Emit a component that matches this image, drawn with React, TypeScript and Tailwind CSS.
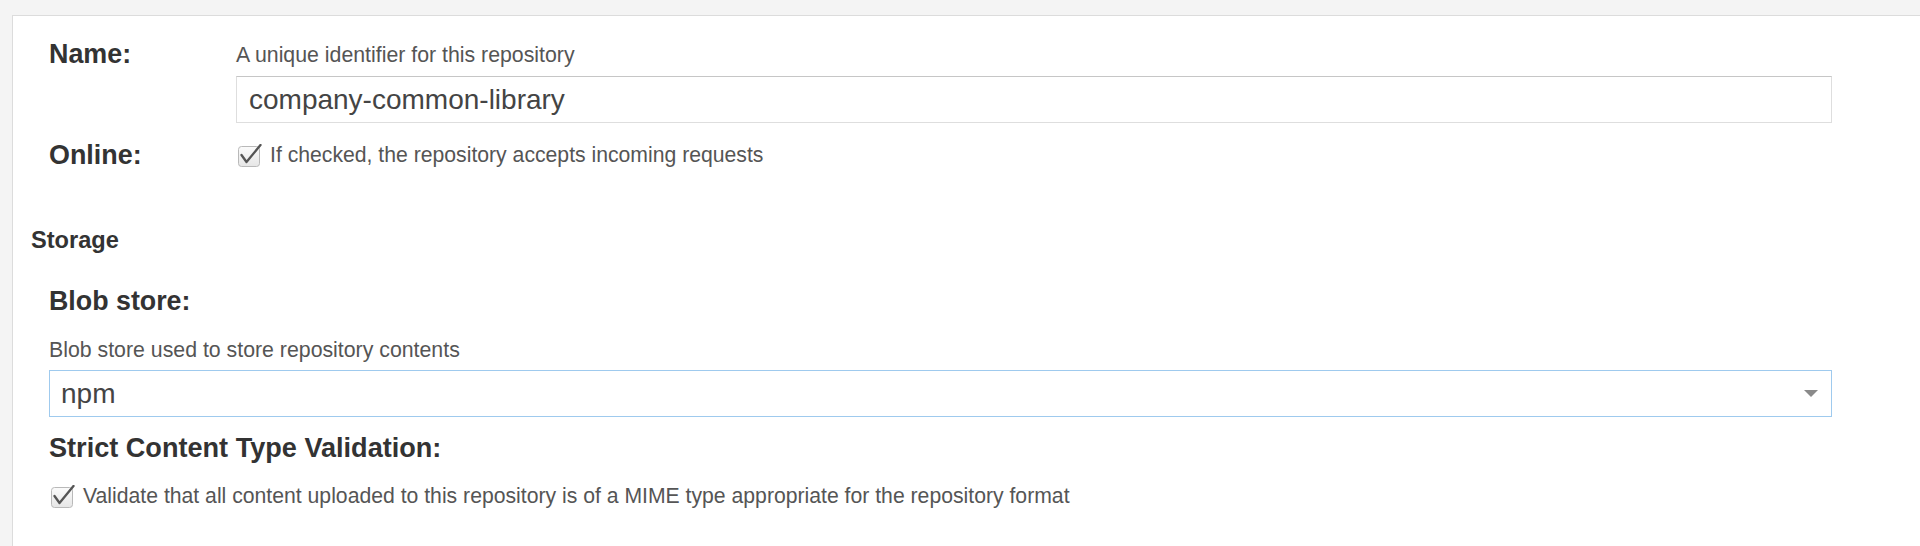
import React from "react";

const font = "font-['Liberation_Sans',Arial,sans-serif]";

// checkbox with the tick running past the box corner, like the ExtJS theme
function Check() {
  return (
    <svg width="24" height="23" viewBox="0 0 24 23" className="shrink-0">
      <defs>
        <linearGradient id="cbg" x1="0" y1="0" x2="0" y2="1">
          <stop offset="0" stopColor="#fbfbfb" />
          <stop offset="1" stopColor="#e6e6e6" />
        </linearGradient>
      </defs>
      <rect x="0.5" y="2.5" width="21" height="20" rx="3" fill="url(#cbg)" stroke="#b9b9b9" />
      <path d="M3.5 11 L8.5 18 L22.5 1" fill="none" stroke="#555" strokeWidth="2.3" strokeLinecap="round" strokeLinejoin="round" />
    </svg>
  );
}

function Label({ children }: { children: React.ReactNode }) {
  return <div className="w-[187px] shrink-0 text-[26.9px] font-bold leading-[30px] text-[#333]">{children}</div>;
}

export default function App() {
  return (
    <div className={`${font} min-h-[546px] bg-[#f4f4f4] pt-[15px] pl-[12px]`}>
      <div className="min-h-[531px] border-t border-l border-[#dcdcdc] bg-white pt-[23px]">
        {/* general */}
        <div className="pl-[36px] pr-[88px]">
          <div className="flex items-start">
            <Label>Name:</Label>
            <div className="flex-1 pt-[4px]">
              <div className="text-[21.3px] leading-[24px] text-[#555]">A unique identifier for this repository</div>
              <div className="mt-[9px] flex h-[47px] items-center border border-[#dedede] border-t-[#c6c6c6] pl-[12px] text-[28px] text-[#444]">
                company-common-library
              </div>
            </div>
          </div>
          <div className="mt-[17px] flex items-center">
            <Label>Online:</Label>
            <div className="flex h-[30px] items-center gap-[8px] pl-[2px]">
              <Check />
              <span className="text-[21.2px] leading-[24px] text-[#555]">If checked, the repository accepts incoming requests</span>
            </div>
          </div>
        </div>

        {/* storage */}
        <div className="mt-[56px] pl-[18px] text-[23.6px] font-bold leading-[28px] text-[#333]">Storage</div>
        <div className="pl-[36px] pr-[88px]">
          <div className="mt-[32px] text-[26.8px] font-bold leading-[30px] text-[#333]">Blob store:</div>
          <div className="mt-[22px] text-[21.3px] leading-[24px] text-[#555]">Blob store used to store repository contents</div>
          <div className="mt-[8px] flex h-[47px] items-center justify-between border border-[#9fcaee] pl-[11px] pr-[13px]">
            <span className="text-[28px] text-[#444]">npm</span>
            <svg width="14" height="7" viewBox="0 0 14 7">
              <path d="M0 0 H14 L7 7 Z" fill="#8a8a8a" />
            </svg>
          </div>
          <div className="mt-[16px] text-[27.1px] font-bold leading-[30px] text-[#333]">Strict Content Type Validation:</div>
          <div className="mt-[18px] flex h-[30px] items-center gap-[8px] pl-[2px]">
            <Check />
            <span className="text-[21.2px] leading-[24px] text-[#555]">
              Validate that all content uploaded to this repository is of a MIME type appropriate for the repository format
            </span>
          </div>
        </div>
      </div>
    </div>
  );
}
